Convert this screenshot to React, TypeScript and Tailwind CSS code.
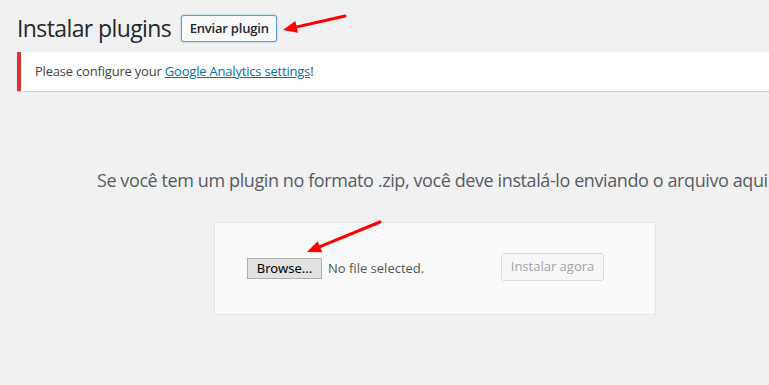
import React from 'react';

const font = { fontFamily: '"Open Sans", "Noto Sans", Arial, sans-serif' };

function Arrow({ x1, y1, x2, y2 }: { x1: number; y1: number; x2: number; y2: number }) {
  // arrow head at (x2, y2)
  const dx = x2 - x1;
  const dy = y2 - y1;
  const len = Math.sqrt(dx * dx + dy * dy);
  const ux = dx / len;
  const uy = dy / len;
  const headLen = 14;
  const headW = 6;
  const bx = x2 - ux * headLen;
  const by = y2 - uy * headLen;
  const p1 = `${bx - uy * headW},${by + ux * headW}`;
  const p2 = `${bx + uy * headW},${by - ux * headW}`;
  return (
    <g>
      <line x1={x1} y1={y1} x2={bx + ux * 2} y2={by + uy * 2} stroke="#f00" strokeWidth={3} strokeLinecap="round" />
      <polygon points={`${x2},${y2} ${p1} ${p2}`} fill="#f00" />
    </g>
  );
}

export default function App() {
  return (
    <div className="relative w-[769px] h-[385px] overflow-hidden bg-[#f1f1f1] text-[#23282d]" style={font}>
      <div className="w-[835px] ml-[17px]">
        {/* Title */}
        <div className="flex items-center pt-[14px]">
          <h1 className="text-[23px] leading-[29px] font-normal tracking-[-0.6px] text-[#23282d]">Instalar plugins</h1>
          <button className="ml-[10px] h-[27px] w-[96px] rounded-[3px] border border-[#5b9dd9] bg-[#fafafa] text-[13px] font-semibold tracking-[-0.2px] text-[#23282d] shadow-[0_0_2px_rgba(30,140,190,0.6)]">
            Enviar plugin
          </button>
        </div>

        {/* Notice */}
        <div className="mt-[9px] w-[760px] border-l-4 border-[#dc3232] bg-white shadow-[0_1px_1px_rgba(0,0,0,0.12)] pl-[14px] h-[39px] flex items-center">
          <p className="text-[13px] tracking-[-0.2px] text-[#444]">
            Please configure your{' '}
            <a className="text-[#0073aa] underline">Google Analytics settings</a>!
          </p>
        </div>

        {/* Help text */}
        <p className="mt-[76px] text-center text-[18px] leading-[27px] tracking-[-0.4px] text-[#555d66] whitespace-nowrap">
          Se você tem um plugin no formato .zip, você deve instalá-lo enviando o arquivo aqui.
        </p>

        {/* Upload form */}
        <div className="mt-[28px] ml-[197px] w-[442px] h-[93px] border border-[#e5e5e5] bg-[#fafafa] flex items-center pl-[32px] pr-[51px]">
          <button className="h-[21px] w-[75px] border border-[#adadad] bg-[#e1e1e1] text-[13px] text-black" style={{ fontFamily: '"Noto Sans", "Open Sans", sans-serif' }}>
            Browse...
          </button>
          <span className="ml-[6px] text-[13px] text-[#555]">No file selected.</span>
          <button className="ml-auto -mt-[3px] h-[28px] w-[103px] rounded-[3px] border border-[#ddd] bg-[#f7f7f7] text-[13px] text-[#a0a5aa]">
            Instalar agora
          </button>
        </div>
      </div>

      {/* annotation arrows */}
      <svg className="absolute left-0 top-0 pointer-events-none" width={769} height={385}>
        <Arrow x1={345} y1={16} x2={283} y2={30} />
        <Arrow x1={380} y1={222} x2={307} y2={252} />
      </svg>
    </div>
  );
}
